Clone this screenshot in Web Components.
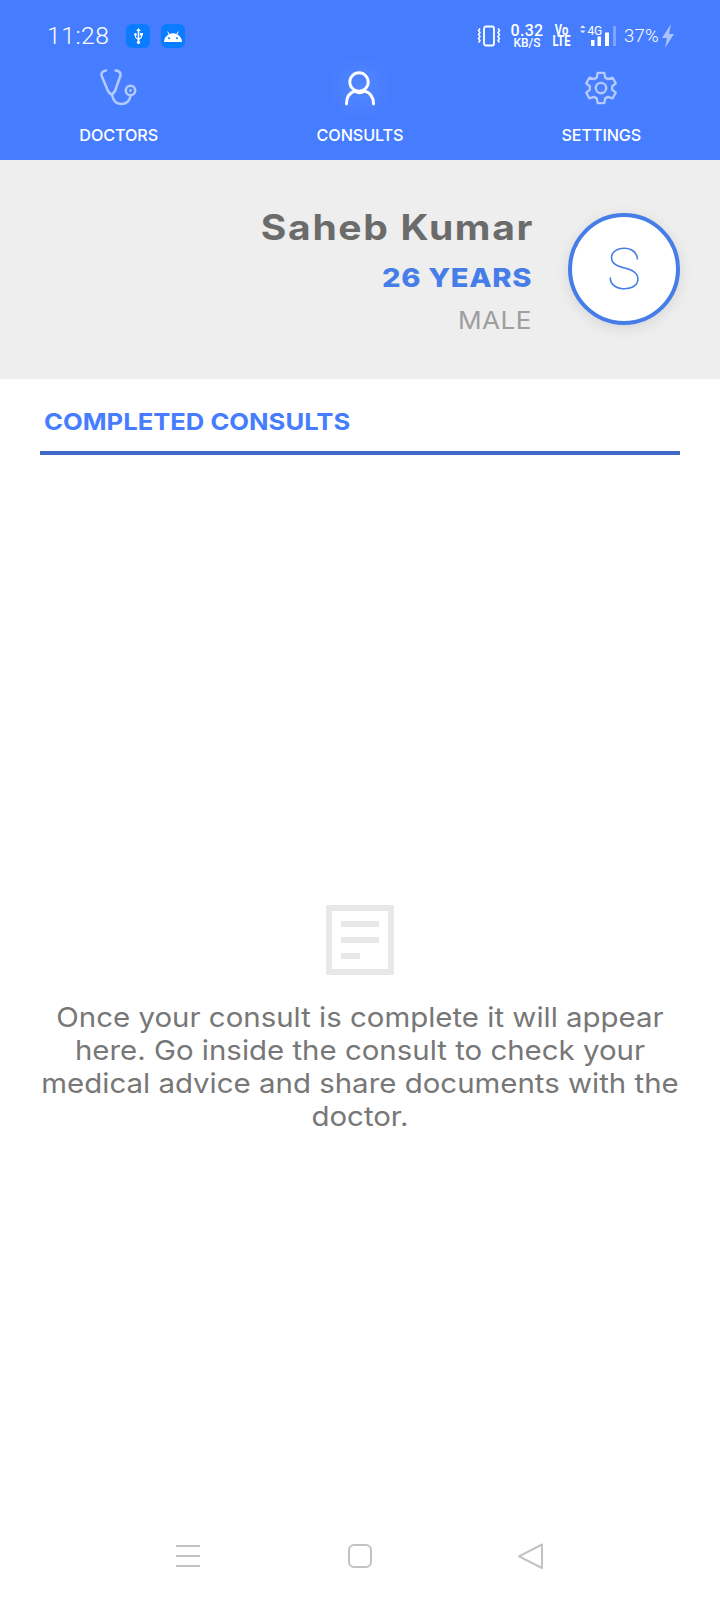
<!DOCTYPE html>
<html lang="en"><head><meta charset="utf-8"><title>Consults</title>
<style>
html,body{margin:0;padding:0;background:#fff}
body{width:720px;height:1600px;display:flex;flex-direction:column;font-family:Inter,"Open Sans",sans-serif;overflow:hidden}
</style></head><body>
<app-header>
  <status-bar></status-bar>
  <tab-bar>
    <nav-tab label="DOCTORS" icon="doctors"></nav-tab>
    <nav-tab label="CONSULTS" icon="consults" active></nav-tab>
    <nav-tab label="SETTINGS" icon="settings"></nav-tab>
  </tab-bar>
</app-header>
<profile-card name="Saheb Kumar" age="26 YEARS" gender="MALE" initial="S"></profile-card>
<section-title>COMPLETED CONSULTS</section-title>
<empty-state>Once your consult is complete it will appear here. Go inside the consult to check your medical advice and share documents with the doctor.</empty-state>
<system-nav></system-nav>
<script>
function def(name, html){
  customElements.define(name, class extends HTMLElement{
    connectedCallback(){
      if(this.shadowRoot) return;
      const r=this.attachShadow({mode:'open'});
      r.innerHTML=typeof html==='function'?html(this):html;
    }
  });
}
def('app-header',`<style>:host{display:block;background:#467dff;height:160px;flex:none}</style><slot></slot>`);
def('status-bar',`<style>
:host{display:flex;align-items:center;height:60px;padding:11px 45px 0 47px;box-sizing:border-box;color:#fff;font-family:Roboto,sans-serif}
.time{font-size:24.5px;font-weight:300;letter-spacing:.6px;width:79px}
.b{width:24px;height:24px;border-radius:6px;background:#0a7cff;margin-right:11px;display:flex;align-items:center;justify-content:center}
.sp{flex:1}
.r{display:flex;align-items:center}
.sp2{display:flex;flex-direction:column;align-items:center;width:32px;margin:0 11px 0 10px;line-height:1}
.sp2 b{font-size:16px;font-weight:500;letter-spacing:.3px;height:14px;line-height:14px;white-space:nowrap}
.sp2 i{font-style:normal;font-weight:500;font-size:12px;height:10px;line-height:10px;white-space:nowrap}
.vo{display:flex;flex-direction:column;align-items:center;width:15px;font-weight:700;font-size:14px;line-height:11px;margin-right:11px;transform:scaleX(.8)}
.net{position:relative;width:36px;height:24px;margin-right:8px}
.net span{position:absolute;left:7.500px;top:1px;font-size:12px;font-weight:400;line-height:12px;letter-spacing:-.2px}
.pct{font-size:18.5px;font-weight:300;letter-spacing:.2px;width:33px;margin-right:4px;white-space:nowrap}
svg{display:block}
</style>
<span class="time">11:28</span>
<span class="b"><svg width="11" height="16" viewBox="0 0 11 16" fill="#fff"><path d="M5.500 0L7.800 3H6.300v7.300L8 9V7.600H7V5h3v2.600H9v1.900l-2.700 2.300V13a1.600 1.600 0 1 1-1.600 0v-1.300L2 9.600V7.700a1.300 1.300 0 1 1 1 0v1.400l1.700 1.300V3H3.200z"/></svg></span>
<span class="b"><svg width="18" height="12" viewBox="0 0 18 12" fill="#fff"><path d="M0 12C.1 8.500 1.900 5.800 4.700 4.500L3.200 1.700l.7-.4 1.600 2.800a9 9 0 0 1 7 0l1.600-2.800.7.4-1.500 2.800c2.800 1.300 4.600 4 4.700 7.500z"/><circle cx="5" cy="8.200" r="1" fill="#0a7cff"/><circle cx="13" cy="8.200" r="1" fill="#0a7cff"/></svg></span>
<span class="sp"></span>
<span class="r">
<svg width="24" height="22" viewBox="0 0 24 22" fill="none" stroke="#fff"><rect x="7" y="1.500" width="10" height="19" rx="2" stroke-width="1.800"/><path d="M3 3.500l-1.500 2 1.500 2-1.500 2 1.500 2-1.500 2 1.500 2-1.500 2M21 3.500l1.500 2-1.500 2 1.500 2-1.500 2 1.500 2-1.500 2 1.500 2" stroke-width="1.500"/></svg>
<span class="sp2"><b>0.32</b><i>KB/S</i></span>
<span class="vo"><span>Vo</span><span>LTE</span></span>
<span class="net"><span>4G</span>
<svg width="36" height="24" viewBox="0 0 36 24" fill="#fff" style="position:absolute;left:0;top:0"><path d="M0 4l2.800-2.800L5.600 4zM0 6.400l2.800 2.800 2.800-2.800z" fill-opacity=".85"/><rect x="11" y="16" width="3.500" height="6"/><rect x="17.500" y="12.500" width="3.500" height="9.500"/><rect x="25" y="8.500" width="4" height="13.500"/><rect x="33" y="2" width="3" height="20" opacity=".3"/></svg></span>
<span class="pct">37%</span>
<svg width="14" height="24" viewBox="0 0 14 24" fill="#fff" fill-opacity=".55"><path d="M10 0L1 14h5l-2 10 9-14H8z"/></svg>
</span>`);
def('tab-bar',`<style>:host{display:grid;grid-template-columns:repeat(3,1fr);height:100px;margin:0 -2px 0 -2px}</style><slot></slot>`);
const ICONS={
doctors:`<svg width="38" height="38" viewBox="100 70 38 38" fill="none" stroke="currentColor" stroke-width="2.500" stroke-linecap="round" stroke-linejoin="round"><path d="M106 71.500Q101 72 101.500 76.500L108 92Q111.500 98 115 92L120.500 76.500Q121 72 115.500 71.500"/><path d="M112 96Q114 105 121 105Q129 105 130.500 97"/><circle cx="130.500" cy="91.500" r="4.700"/><circle cx="130.500" cy="91.500" r=".8" stroke-width="1.200"/></svg>`,
consults:`<svg width="32" height="36" viewBox="344.500 70.500 32 36" fill="none" stroke="currentColor" stroke-width="2.900" stroke-linecap="round"><circle cx="359.500" cy="82.500" r="9.200"/><path d="M347 104.500C347 97 350.500 93 355.500 91.500Q360 95 365 91.500C370.500 93 374 97 374 104.500"/></svg>`,
settings:`<svg width="34" height="36" viewBox="0 0 36 36" fill="none" stroke="currentColor" stroke-width="2.500" stroke-linejoin="round"><path d="M14.500 2h7l1 5 2.800 1.600 4.900-1.600 3.400 6-3.800 3.400v3.200l3.800 3.400-3.400 6-4.900-1.600-2.800 1.600-1 5h-7l-1-5-2.800-1.600-4.900 1.600-3.400-6 3.800-3.400v-3.200L2.400 13l3.400-6 4.900 1.600L13.500 7z"/><circle cx="18" cy="18" r="5.500"/></svg>`};
def('nav-tab',h=>{const a=h.hasAttribute('active');return `<style>
:host{display:flex;flex-direction:column;align-items:center;color:#fff}
.i{width:64px;height:64px;margin-top:-4px;display:flex;align-items:center;justify-content:center;color:${a?'#fff':'#b4cbff'};background:radial-gradient(closest-side,rgba(255,255,255,${a?.07:.015}),rgba(255,255,255,0))}
.l{font-size:16.200px;font-weight:500;line-height:20px;margin-top:5px;letter-spacing:-.1px}
</style><span class="i">${ICONS[h.getAttribute('icon')]}</span><span class="l">${h.getAttribute('label')}</span>`});
def('profile-card',h=>`<style>
:host{display:flex;flex:none;height:219px;background:#eee;justify-content:flex-end;box-sizing:border-box;padding:49px 40px 0 0;gap:36px}
.t{display:flex;flex-direction:column;align-items:flex-end}
.t span{display:inline-block;transform-origin:right center;white-space:nowrap}
.n{font-size:35px;font-weight:700;color:#6b6b6b;line-height:36px;letter-spacing:1.500px;margin-right:-2px;transform:scaleX(1.115)}
.a{font-size:26px;font-weight:800;color:#467de8;line-height:30px;margin-top:18px;letter-spacing:.6px;transform:scaleX(1.12)}
.g{font-size:24px;font-weight:400;color:#9e9e9e;line-height:30px;margin-top:13px;letter-spacing:.4px;transform:scaleX(1.09)}
.c{width:112px;height:112px;box-sizing:border-box;margin-top:4px;border:4px solid #467de8;border-radius:50%;background:#fff;box-shadow:0 3px 14px rgba(0,0,0,.1);display:flex;align-items:center;justify-content:center;color:#467de8;font:100 58px Roboto,sans-serif}
</style><div class="t"><span class="n">${h.getAttribute('name')}</span><span class="a">${h.getAttribute('age')}</span><span class="g">${h.getAttribute('gender')}</span></div><div class="c">${h.getAttribute('initial')}</div>`);
def('section-title',`<style>
:host{display:block;flex:none;margin:0 40px;padding:28px 4px 19px;border-bottom:4px solid #4169c8;color:#467dff;font-size:23.500px;font-weight:700;line-height:30px;height:25px;box-sizing:content-box}
span{display:inline-block;transform:scaleX(1.09);transform-origin:left center;white-space:nowrap}
</style><span><slot></slot></span>`);
def('empty-state',`<style>
:host{display:flex;flex-direction:column;align-items:center;flex:none;padding:450px 40px 0;color:#777;font-size:27.500px;line-height:33px;text-align:center}
svg{display:block;margin-bottom:26px}
div{width:600px;transform:scaleX(1.07)}
</style><svg width="68" height="70" viewBox="0 0 68 70" fill="#e8e8e8"><path fill-rule="evenodd" d="M0 0h68v70H0zM6 6v58h56V6z"/><rect x="15" y="16" width="38" height="6"/><rect x="15" y="32" width="38" height="6"/><rect x="15" y="48" width="19" height="6"/></svg><div><slot></slot></div>`);
def('system-nav',`<style>
:host{display:block;position:fixed;left:0;right:0;bottom:0;height:80px}
svg{display:block}
</style><svg width="720" height="80" viewBox="0 0 720 80" fill="none" stroke="#c2c2c2" stroke-width="2" stroke-linejoin="round"><path d="M176 26h24M176 36h24M176 46h24"/><rect x="349" y="25" width="22" height="22" rx="5"/><path d="M542 24.500V48L519 36.300z"/></svg>`);
</script>
</body></html>
